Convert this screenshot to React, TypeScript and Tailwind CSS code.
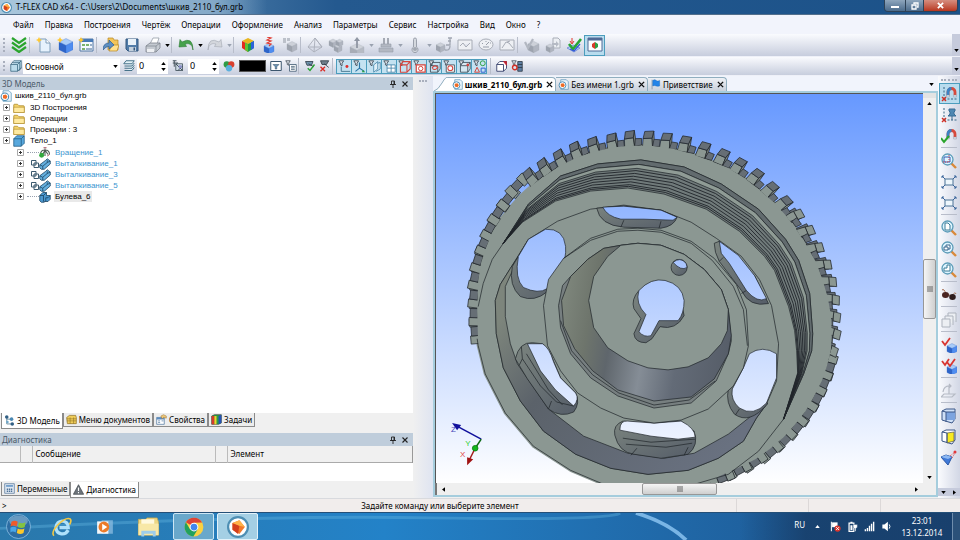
import React from "react";
import clsx from "clsx";

type Point = [number, number];

const cube = (x: number, y: number, s: number, top: string, left: string, right: string) => (
	<g strokeWidth=".3" stroke={left}>
		<path d={`M${x} ${y}l${s} ${-s / 2}l${s} ${s / 2}l${-s} ${s / 2}z`} fill={top} />
		<path d={`M${x} ${y}v${s * 1.1}l${s} ${s / 2}v${-s * 1.1}z`} fill={left} />
		<path d={`M${x + s * 2} ${y}v${s * 1.1}l${-s} ${s / 2}v${-s * 1.1}z`} fill={right} />
	</g>
);
const blueCube = (x: number, y: number, s: number) => cube(x, y, s, "#a9ccf8", "#2e65c9", "#4f8df0");
const grayCube = (x: number, y: number, s: number) => cube(x, y, s, "#cdd1d9", "#9da3ae", "#b0b5c0");
const star = <path d="M3 0l1 2 2 1-2 1-1 2-1-2-2-1 2-1z" fill="#ffc830" />;
const funnel = <path d="M1 1h6L5 4v3l-2-1V4z" fill="#dfe5ec" stroke="#27313c" strokeWidth=".9" />;
const zoomGlass = (
	<>
		<path d="M10 10l5 5" stroke="#d98a3a" strokeWidth="2.4" />
		<circle cx="6.500" cy="6.500" r="5.500" fill="#dff5ff" stroke="#5c9cb8" strokeWidth="1.300" />
	</>
);
const magnet = (
	<>
		<path d="M7 9V6a3.500 3.500 0 017 0v3" fill="none" stroke="#d74a3c" strokeWidth="2.800" />
		<path d="M7 10V6q0-3.500 3.500-3.500" fill="none" stroke="#3b82c4" strokeWidth="2.800" />
		<path d="M5.600 9h2.800v2H5.600zM12.600 9h2.800v2h-2.800z" fill="#dce3ea" stroke="#889" strokeWidth=".4" />
	</>
);
const snapLines = <path d="M3 1v12M3 13h13" stroke="#376583" strokeWidth="1" strokeDasharray="2 1.500" fill="none" />;
const redCross = <path d="M1 11l4 4M5 11l-4 4" stroke="#d22f25" strokeWidth="1.400" />;
const tflexLogo = (
	<>
		<circle cx="8" cy="8" r="7.200" fill="#fff" stroke="#4d8eb3" strokeWidth="1.600" />
		<path d="M4 5l5-2 4 5-4 5-5-3z" fill="#f2792b" />
		<path d="M4 5l5 2-1 6-4-3z" fill="#d33f1c" />
		<path d="M4 5l5-2 4 5-4-1z" fill="#ffb248" />
	</>
);

const icons: Record<string, React.ReactNode> = {
	tflex: tflexLogo,
	chevrons: (
		<path d="M1 1l7 5 7-5M1 5.500l7 5 7-5M1 10l7 5 7-5" fill="none" stroke="#2aa52d" strokeWidth="2.200" />
	),
	newDoc: (
		<>
			<path d="M4 2h6l4 4v9H4z" fill="#e6f2fd" stroke="#7f9db9" />
			<path d="M10 2v4h4" fill="#fff" stroke="#7f9db9" />
			{star}
		</>
	),
	newCube: <>{blueCube(2, 5, 7)}{star}</>,
	newWindow: (
		<>
			<path d="M2 2h13v12H2z" fill="#f5f9fe" stroke="#5278a6" />
			<path d="M2 2h13v3H2z" fill="#4779b5" />
			<path d="M4 7h3v2H4zM8 7h3v2H8zM4 11h3v2H4z" fill="#7cb36c" />
			<path d="M12 7h2v2h-2zM8 11h6v2H8z" fill="#9ab0c8" />
			{star}
		</>
	),
	open: (
		<>
			<path d="M5 4V1h5l1 2h4v10H5z" fill="#f3c65a" stroke="#b88723" strokeWidth=".7" />
			<path d="M6 14l3-6h7l-2 6z" fill="#ffe18d" stroke="#b88723" strokeWidth=".7" />
			<path d="M0 13Q0 6 6 6V3l5 5-5 4V9.500Q3 9 0 13z" fill="#5d8fc2" stroke="#2e5c92" strokeWidth=".7" />
		</>
	),
	save: (
		<>
			<path d="M2 2h12v12H4l-2-2z" fill="#507ba8" stroke="#34587f" />
			<path d="M4 2h8v6H4z" fill="#e8f1f9" />
			<path d="M5 10h7v4H5z" fill="#c2cfdc" />
			<path d="M9.500 10.500h1.500v3H9.500z" fill="#34587f" />
		</>
	),
	print: (
		<>
			<path d="M5 7l3-6h6l-2 6z" fill="#fff" stroke="#8b939d" strokeWidth=".7" />
			<path d="M1 9l4-3h10v5l-4 4H1z" fill="#c5cad1" stroke="#7d848d" strokeWidth=".8" />
			<path d="M1 9h10l4-3M11 9v6" stroke="#7d848d" strokeWidth=".7" fill="none" />
			<path d="M2 12h7v3H2z" fill="#eef0f3" />
		</>
	),
	undo: <path d="M15 13Q14 5 7 7L8.500 9.500L1 10L2 2.500L4 5Q15-1 15 13z" fill="#46a24b" stroke="#2d7a34" strokeWidth=".6" />,
	redo: <path d="M1 13Q2 5 9 7L7.500 9.500L15 10L14 2.500L12 5Q1-1 1 13z" fill="#d3d6dc" stroke="#a3a8b2" strokeWidth=".6" />,
	rgb: (
		<>
			<path d="M2 4l6-3 6 3-6 3z" fill="#e8b61f" />
			<path d="M2 4l6 3v8l-6-4z" fill="#e32a1e" />
			<path d="M5 5.500L8 7v8l-3-2z" fill="#5fc531" />
			<path d="M14 4L8 7v8l6-4z" fill="#1e9e47" />
			<path d="M14 4l-3 1.500V13l3-2z" fill="#2b62d9" />
		</>
	),
	spring: (
		<>
			{blueCube(3, 9, 5)}
			<path d="M6 0l4 1-4 2 4 1-4 2 4 1-2 2" fill="none" stroke="#e03a30" strokeWidth="1.200" />
		</>
	),
	grayParts: <>{grayCube(5, 7, 5)}<path d="M1 1h3v5H1zM5 1h3v3H5z" fill="#bcc1ca" /></>,
	tetra: (
		<path d="M8 1L1 10l6 5 8-5zM8 1L7 15M1 10h14M8 1l7 9" fill="none" stroke="#a9aeb9" strokeWidth=".9" />
	),
	grayBlocks: <>{grayCube(1, 4, 4)}{grayCube(6, 9, 4)}{grayCube(8, 4, 3.500)}</>,
	extrude: (
		<>
			{cube(1, 10, 7, "#cfd3da", "#a7acb6", "#b6bbc4")}
			<path d="M8 11V3" stroke="#8f96a3" strokeWidth="1.800" />
			<path d="M5 4l3-4 3 4z" fill="#8f96a3" />
		</>
	),
	press: (
		<>
			<path d="M5 1h2v6H5zM9 1h2v6H9z" fill="#a4a9b3" />
			<path d="M3 7h10v3H3zM1 11h14v4H1z" fill="#b3b8c2" stroke="#969ca7" strokeWidth=".6" />
		</>
	),
	thermo: (
		<>
			<path d="M6.500 2.500a1.500 1.500 0 013 0V10a3 3 0 11-3 0z" fill="#d4d8de" stroke="#9ba1ac" />
			<circle cx="8" cy="12" r="2" fill="#a2a8b2" />
		</>
	),
	measure: (
		<>
			{grayCube(0, 8, 4.500)}
			<path d="M10 8h4V1M12 1h4M12 4h3M9 13q5 1 5-4" fill="none" stroke="#a1a7b2" strokeWidth="1.300" />
		</>
	),
	chart: <path d="M1 3h14v10H1zM3 9l3-3 3 4 4-4" fill="#eef0f4" stroke="#a7acb6" />,
	gauge: (
		<>
			<ellipse cx="8" cy="7.500" rx="7" ry="5.500" fill="#eef0f4" stroke="#a7acb6" />
			<path d="M8 8l3-3M4 6l1 1M8 4v1M12 6h1M5 10h6" stroke="#979da8" />
		</>
	),
	curve: <path d="M1 3h14v10H1zM3 11l4-6 3 1 4 5M8 5l3-1" fill="#eef0f4" stroke="#a7acb6" />,
	checkCube: <>{grayCube(4, 7, 5.500)}<path d="M1 5l3 6 5-9" fill="none" stroke="#b2b7c1" strokeWidth="2.200" /></>,
	exportDoc: (
		<>
			<path d="M8 1h5l2 2v8H8z" fill="#eceff3" stroke="#a9aeb8" />
			{grayCube(1, 9, 4)}
			<path d="M7 6h4V4l3 3-3 3V8H7z" fill="#b5bac4" />
		</>
	),
	check3d: (
		<>
			<path d="M1 11l6-3 7 3-6 4z" fill="#b8c9f4" stroke="#4b6ecf" strokeWidth=".6" />
			<path d="M3 7l4 5 8-10" fill="none" stroke="#28a536" strokeWidth="2.600" />
			<path d="M4 12l4 2 6-7" fill="none" stroke="#3158d8" strokeWidth="1.300" />
			<path d="M6 1v5M4 4l2 3 2-3" fill="none" stroke="#e23b2e" />
		</>
	),
	window3d: (
		<>
			<path d="M1 1h14v13H1z" fill="#fbfdff" stroke="#516a96" />
			<path d="M1 1h14v2.500H1z" fill="#516a96" />
			<path d="M5 7l3-2v7l-3-2z" fill="#d83a2b" />
			<path d="M11 7L8 5v7l3-2z" fill="#2f9e44" />
		</>
	),
	layers: (
		<path d="M5 1h10v10l-2 0M3 3.500h10v10h-2M1 6h9v9H1zM1 6l4-5M10 6l5-5M10 15l5-4" fill="#bcdcec" stroke="#35657f" />
	),
	sheets: (
		<path d="M4 1h11l-3 4H1zM2 8h10l3-4M2 11h10l3-4M2 14h10l3-4" fill="#e3f2f8" stroke="#35657f" strokeWidth="1.200" />
	),
	priority: (
		<>
			<path d="M5 5h9v9H5z" fill="#cddae4" stroke="#36454f" />
			<path d="M1 1h5M3 1v8M1 4h7M5 5l9 9M8 14l6-6" stroke="#36454f" strokeWidth="1.200" />
			<path d="M9 7h4v4H9z" fill="#8d91c9" />
		</>
	),
	palette: (
		<>
			<circle cx="5" cy="6" r="4.200" fill="#2e9b46" />
			<circle cx="11" cy="6" r="4.200" fill="#d8402f" />
			<circle cx="8" cy="11" r="4.200" fill="#5cb0dd" />
		</>
	),
	filterBox: <><path d="M1 2h14v12H1z" fill="#fff" stroke="#35516a" strokeWidth="1.300" /><path d="M4 6h8l-3 3v3H7V9z" fill="#6b94b5" stroke="#35516a" strokeWidth=".7" /></>,
	filterList: <>{funnel}<path d="M6 6h9v9H6z" fill="#fff" stroke="#35516a" /><path d="M8 8.500h5M8 10.500h5M8 12.500h5" stroke="#35516a" /></>,
	filterOk: <><path d="M2 2h10l-2 5H4zM6 5l7 4" fill="#6f93ad" stroke="#27313c" /><path d="M5 11l3 3 6-8" fill="none" stroke="#29a333" strokeWidth="1.800" /></>,
	filterNo: <><path d="M2 1h11l-3 5H4zM7 5l6 5" fill="#6f7f8c" stroke="#27313c" /><path d="M2 9l6 6M8 9l-6 6" stroke="#d92d27" strokeWidth="1.800" /></>,
	fPoint: <>{funnel}<path d="M4 8v6h11" fill="none" stroke="#35657f" /><circle cx="11" cy="8" r="1.800" fill="#df2f2b" /></>,
	fAxes: <>{funnel}<path d="M8 3v7l6 4M8 10l-5 4" fill="none" stroke="#2b76a8" strokeWidth="1.400" /><path d="M12 12l3 3h-4z" fill="#2da044" /></>,
	fPlane: <>{funnel}<path d="M7 6l5-4v9l-5 4zM12 4l3-1v8l-5 3" fill="#dff0f8" stroke="#4283a8" /></>,
	fGrid: <>{funnel}<path d="M5 6h10v9H5zM10 6v9M5 10h10" fill="#fff" stroke="#4283a8" /></>,
	fBody: <>{funnel}<path d="M3 6h8v9H3zM3 6l3-4h9v9l-4 4M11 6l4-4" fill="none" stroke="#d5443d" strokeWidth="1.300" /></>,
	fFace: <>{funnel}<path d="M4 6h11v9H4z" fill="#fff" stroke="#d5443d" strokeWidth="1.500" /><circle cx="9.500" cy="10.500" r="2.700" fill="none" stroke="#d5443d" strokeWidth="1.200" /></>,
	fEdge: <>{funnel}<path d="M3 7h9v8H3zM3 7l3-4h9v8l-3 4" fill="none" stroke="#36454f" /><path d="M5 10q3-5 7-1-3 5-7 1" fill="none" stroke="#d5443d" strokeWidth="1.300" /></>,
	fLoop: <>{funnel}<path d="M4 6h10v9H4z" fill="#fff" stroke="#36454f" /><circle cx="9" cy="10" r="3" fill="none" stroke="#d5443d" strokeWidth="1.300" /></>,
	fVertex: <>{funnel}<path d="M3 7h9v8H3zM3 7l3-4h9v8l-3 4M12 7l3-4" fill="#d5e8f2" stroke="#36454f" /><circle cx="12" cy="6" r="1.600" fill="#d5443d" /></>,
	fShapes: <>{funnel}<path d="M2 15l3-6 3 6z" fill="none" stroke="#d5443d" strokeWidth="1.200" /><circle cx="12" cy="4" r="3" fill="none" stroke="#2da044" strokeWidth="1.200" /><path d="M10 10h5v5h-5z" fill="none" stroke="#2c5fd0" strokeWidth="1.200" /></>,
	corner: <><path d="M1 6h9v9H1zM1 6l4-4h9v9l-4 4" fill="#fff" stroke="#36416b" strokeWidth="1.200" /><path d="M10 2h4v5z" fill="#c02433" stroke="#c02433" /></>,
	section: <><path d="M9 2h6v13H9z" fill="#5e7fa3" stroke="#27313c" /><path d="M9 6h6M9 10h6" stroke="#27313c" />{funnel}<circle cx="5" cy="10" r="3" fill="none" stroke="#d22f25" strokeWidth="1.800" /></>,
	magnetSnap: <>{snapLines}{magnet}{redCross}</>,
	pinSnap: <>{snapLines}<path d="M8 2h6v2l-1 1v2l2 2H7l2-2V5L8 4zM11 9v4" fill="#4f88b3" stroke="#386c94" />{redCross}</>,
	magnetOk: <>{magnet}<path d="M0 10l3 4 5-6" fill="none" stroke="#2aa52d" strokeWidth="2" /></>,
	zoomWin: <>{zoomGlass}<path d="M3 4h6v5H3z" fill="none" stroke="#355db5" /><path d="M8 2v7H2" fill="none" stroke="#d3464a" strokeDasharray="1 1" /></>,
	fit: <><path d="M4 5h8v6H4z" fill="#edf6fc" stroke="#4a7396" /><path d="M1 2l3 3M15 2l-3 3M1 14l3-3M15 14l-3-3M1 4V2h2M13 2h2v2M1 12v2h2M13 14h2v-2" fill="none" stroke="#39649a" /></>,
	zoomPage: <>{zoomGlass}<path d="M4 3h3l2 2v5H4z" fill="#fff" stroke="#3a7c98" /></>,
	zoomObj: <>{zoomGlass}<path d="M3 6h4v3H3zM5 6V4h4v4H7" fill="#fff" stroke="#36648c" /></>,
	zoomSheet: <>{zoomGlass}<path d="M6 3h3v6H3V6h3z" fill="#fff" stroke="#3a7c98" /></>,
	glasses: <><path d="M1 3q2-2 4 4l6 2q3-5 4-2" fill="none" stroke="#a36d50" /><ellipse cx="4.500" cy="8" rx="3.500" ry="3" fill="#4a2521" /><ellipse cx="11.500" cy="10" rx="3.300" ry="3" fill="#2e1d1d" /></>,
	copies: <path d="M7 1h8v9M4 4h8v9M1 7h8v8H1zM7 1v3M4 4v3" fill="#eceff3" stroke="#adb3bd" />,
	checkOne: <>{blueCube(6, 9, 5)}<path d="M1 4l3 4 5-7" fill="none" stroke="#d83632" strokeWidth="1.800" /></>,
	checkTwo: <>{blueCube(6, 9, 5)}<path d="M1 3l3 4 4-6M6 4l3 4 5-7" fill="none" stroke="#d83632" strokeWidth="1.800" /></>,
	rotatePlane: <path d="M3 11h11l-3 3H0zM8 11V3M2 9q1-7 8-6M8 1l2 2-2 2" fill="none" stroke="#b6bbc5" strokeWidth="1.200" />,
	shaded: <><path d="M1 3l4-2h9v10l-3 4-10-3z" fill="#cfe0f7" stroke="#3a5687" /><path d="M5 4h9v8H5z" fill="#7da4df" /><path d="M1 3l4 1h9M5 4v10" fill="none" stroke="#3a5687" /></>,
	yellowFace: <><path d="M1 3l4-2h9v10l-3 4-10-3z" fill="#fff" stroke="#3a5687" /><path d="M6 4l7-1v9l-7 2z" fill="#f8ea20" stroke="#555" strokeWidth=".7" /><path d="M1 3l5 1M6 14V4" fill="none" stroke="#3a5687" /></>,
	camera: <><path d="M0 7l5-2 6 2-4 8z" fill="#3f79d8" stroke="#2855a4" /><path d="M0 7l5-2 6 2-4 2z" fill="#8db8f2" /><path d="M9 6l5-4M11 8l3-5" stroke="#e2484a" strokeDasharray="1 1" /><circle cx="14" cy="2" r="1.500" fill="#e2383a" /></>,
	folder: <><path d="M1 4q0-1 1-1h4l2 2h6q1 0 1 1v8H1z" fill="#f3d36b" stroke="#a98524" /><path d="M1 7h14v7H1z" fill="#ffeaa0" stroke="#a98524" strokeWidth=".7" /></>,
	docFile: <><path d="M4 1h8l3 3v11H4z" fill="#e9f4fb" stroke="#5995b9" /><circle cx="6.500" cy="9" r="5" fill="#fff" stroke="#4d8eb3" strokeWidth="1.400" /><path d="M4 7l4-1 2 3-2 3-4-1z" fill="#ee6c25" /></>,
	body: <><path d="M1 5l4-4h10v10l-4 4H1z" fill="#58a8dd" stroke="#1f587f" /><path d="M1 5h10v10M11 5l4-4" fill="none" stroke="#1f587f" /></>,
	revolve: <><path d="M2 10q0-6 6-6t6 6M8 2v10M8 4l-3 6M8 4l4 6" fill="none" stroke="#4c5b52" strokeWidth="1.400" /><circle cx="3.500" cy="11" r="3.300" fill="#33a83e" /><path d="M6 1h4M11 12l3-2" stroke="#a3485d" fill="none" strokeWidth="1.300" /></>,
	push: <><path d="M1 9l8-6 2-2 4 3v4l-8 7H3l-2-2z" fill="#65b0df" stroke="#173f5b" /><path d="M1 9l4 2 6-5 0-3M5 11v4M11 6l4-2" fill="none" stroke="#173f5b" /></>,
	boolean: <><path d="M1 6l4-4h5v4h5v5l-3 3H7v1H3l-2-2z" fill="#4b98d0" stroke="#173f5b" /><path d="M1 6h5l4-4M6 6v8M9 9h3l3-3M9 9v5" fill="none" stroke="#173f5b" /></>,
	overlap: <path d="M1 1h9v9H1zM6 6h9v9H6z" fill="none" stroke="#27485f" strokeWidth="1.800" />,
	tree3d: <><path d="M4 3v10h6M4 6h6" fill="none" stroke="#35657f" /><circle cx="4" cy="3" r="2.600" fill="#315f84" /><circle cx="11" cy="6" r="2.600" fill="#4a88b3" /><circle cx="12" cy="13" r="2.600" fill="#315f84" /><circle cx="5" cy="10" r="1.800" fill="#6da7ca" /></>,
	menuDocs: <><path d="M1 5l4-3h9l1 3v9H2z" fill="#f0cd59" stroke="#8a6c1e" /><path d="M1 7h14M1 10h14M6 5v9M11 5v9" stroke="#8a6c1e" strokeWidth=".8" /></>,
	props: <><path d="M1 5h11v10H1z" fill="#fff" stroke="#48719c" /><path d="M1 5h11v3H1z" fill="#5c8cc0" /><path d="M3 10h3M3 12.500h3M8 10h3" stroke="#48719c" /><path d="M7 3l4-2 4 2v3l-4-1-2 2z" fill="#ecc77a" stroke="#9b702b" strokeWidth=".7" /></>,
	tasks: <><path d="M1 3l4-2h10v12l-4 2H1z" fill="#2f9e44" stroke="#222" strokeWidth=".8" /><path d="M1 3h4v12H1z" fill="#d83a2b" /><path d="M5 3h3v12H5z" fill="#f4d32d" /><path d="M11 3l4-2v12l-4 2z" fill="#2650b8" /></>,
	vars: <><path d="M1 1h14v14H1z" fill="#dfe9f3" stroke="#4e7196" /><path d="M3 3h10v2.500H3z" fill="#6c9ac8" /><path d="M4 8h2v2H4zM7 8h2v2H7zM10 8h2v2h-2zM4 11h2v2H4zM7 11h2v2H7zM10 11h2v2h-2z" fill="#4e7196" /></>,
	warn: <><path d="M8 1l7.500 14H.5z" fill="#6d747b" stroke="#40464c" /><path d="M8 5v5M8 11.500v2" stroke="#fff" strokeWidth="1.600" /></>,
	flag: <><path d="M3 1v14" stroke="#8b9aa9" strokeWidth="1.300" /><path d="M4 2q3-2 5 0t5 0v8q-3 1-5 0t-5 0z" fill="#2384e8" stroke="#1763b5" strokeWidth=".6" /></>,
	orb: (
		<>
			<circle cx="8" cy="8" r="7.700" fill="#2d6da3" stroke="#8fc2e5" strokeWidth=".5" />
			<ellipse cx="8" cy="4.500" rx="6" ry="3.600" fill="#8fb9d6" opacity=".6" />
			<path d="M3.500 5q2-1.500 4 0l-.6 3q-2-1.200-4 0z" fill="#ee5a2a" />
			<path d="M8.200 5.300q2 1.300 4.300 0L12 8.300q-2 1.200-4.400 0z" fill="#83c341" />
			<path d="M2.800 8.800q2-1.200 4 0l-.6 3q-2-1.200-3.400 0z" fill="#49a6e8" />
			<path d="M7.500 9.200q2 1.200 4.300 0l-.6 3q-2 1.200-4.300 0z" fill="#fcc92b" />
		</>
	),
	ie: (
		<>
			<path d="M13 10.500Q11 14 7.500 13.500 3 12.500 3.200 8 4 3.500 8 3.200q5 .3 5 5.300H6" fill="none" stroke="#aee1fb" strokeWidth="2.600" />
			<path d="M1.500 15Q-1 12 5 6T14.500 1.500Q16 3 14 6" fill="none" stroke="#f3c845" strokeWidth="1.300" />
		</>
	),
	player: <><path d="M5 2h10v12H5z" fill="#86b9de" opacity=".8" /><path d="M1 3h10v11H1z" fill="#f3f6f9" /><circle cx="7" cy="8" r="4.800" fill="#ec7b29" /><path d="M5.500 5l4.500 3-4.500 3z" fill="#fff" /></>,
	explorer: <><path d="M1 3h5l1-1h7l1 3v9H1z" fill="#ecd684" stroke="#c5a751" strokeWidth=".5" /><path d="M3 3h9v4H3z" fill="#fff9df" /><path d="M1 6h14v8H1z" fill="#f8e8a7" /><path d="M3 15v-4h10v4h-2v-2H5v2z" fill="#9ecdea" /></>,
	chrome: (
		<>
			<circle cx="8" cy="8" r="7.500" fill="#fad141" />
			<path d="M8 8L1.500 4.200A7.500 7.500 0 0114.500 4.400L8 4.600z" fill="#dc4437" />
			<path d="M1.500 4.200A7.500 7.500 0 007.500 15.500L11 9.800 8 8 4.800 9.800z" fill="#22a15c" />
			<circle cx="8" cy="8" r="3.500" fill="#fff" />
			<circle cx="8" cy="8" r="2.700" fill="#4286ed" />
		</>
	),
	trayFlag: <><path d="M2 1v14" stroke="#fff" strokeWidth="1.500" /><path d="M3 2h8v7H3z" fill="#fff" /><circle cx="11" cy="11" r="4.500" fill="#d8372e" /><path d="M9 9l4 4M13 9l-4 4" stroke="#fff" strokeWidth="1.400" /></>,
	power: <><path d="M3 3h7v12H3z" fill="none" stroke="#fff" strokeWidth="1.800" /><path d="M5 1h3v2H5zM5 6h3v7H5z" fill="#fff" /><path d="M9 5h6v4l-2 2v4h-2v-4L9 9z" fill="#fff" stroke="#244b74" strokeWidth=".6" /></>,
	signal: <path d="M1 12h2v3H1zM4 10h2v5H4zM7 7h2v8H7zM10 4h2v11h-2zM13 1h2v14h-2z" fill="#fff" />,
	sound: <><path d="M2 5h3l5-4v14l-5-4H2z" fill="#fff" /><path d="M12 5q2 3 0 6" fill="none" stroke="#fff" strokeWidth="1.400" /></>,
};

const Icon = ({ name, className = "size-4" }: { name: string; className?: string }) => (
	<svg viewBox="0 0 16 16" className={clsx("shrink-0", className)} aria-hidden="true">
		{icons[name]}
	</svg>
);

const menuItems = [
	"Файл", "Правка", "Построения", "Чертёж", "Операции", "Оформление", "Анализ",
	"Параметры", "Сервис", "Настройка", "Вид", "Окно", "?",
];

// "|" is a separator, "v" is a drop-down arrow
const mainTools = [
	"chevrons", "|", "newDoc", "newCube", "newWindow", "|", "open", "save", "print", "v", "|",
	"undo", "v", "redo", "v", "|", "rgb", "spring", "grayParts", "|", "tetra", "grayBlocks",
	"extrude", "v", "press", "v", "thermo", "v", "measure", "chart", "gauge", "curve", "|",
	"checkCube", "exportDoc", "check3d", "window3d",
];
const filterTools = [
	"fPoint", "fAxes", "fPlane", "fGrid", "fBody", "fFace", "fEdge", "fLoop", "fVertex", "fShapes",
];
const viewTools = [
	"magnetSnap", "pinSnap", "magnetOk", "|", "zoomWin", "fit", "fit", "|", "zoomPage", "zoomObj",
	"zoomSheet", "|", "glasses", "|", "copies", "|", "checkOne", "checkTwo", "|", "rotatePlane", "|",
	"shaded", "yellowFace", "camera",
];

const Grip = () => (
	<div className="w-2 shrink-0 flex justify-center py-1">
		<div className="border-l-2 border-dotted border-[#a9afbd]" />
	</div>
);

const Arrow = ({ className = "" }: { className?: string }) => (
	<svg viewBox="0 0 6 4" className={clsx("w-[5px] h-[3px]", className)} aria-hidden="true">
		<path d="M0 0h6L3 4z" fill="currentColor" />
	</svg>
);

const Separator = () => <div className="w-px h-4 mr-[3px] bg-[#b8bdca] shrink-0" />;

const TitleBar = () => (
	<header className="h-[15px] shrink-0 flex items-center justify-between bg-linear-to-r from-[#7daac8] via-[#24598f] via-35% to-[#1c5289] border-b border-[#536f8c]">
		<div className="h-full flex items-center gap-1 pl-px pr-6 bg-linear-to-r from-[#a9c7dc] via-[#84a9c8] via-80% to-transparent">
			<Icon name="tflex" className="size-[11px]" />
			<h1 className="text-[8px]">T-FLEX CAD x64 - C:\Users\2\Documents\шкив_2110_бул.grb</h1>
		</div>
		<div className="flex self-start h-3 mr-0.5 text-white border border-t-0 border-[#2e4257] rounded-b-sm overflow-hidden">
			<button aria-label="Свернуть" className="w-5 flex items-center justify-center bg-linear-to-b from-[#8fa6bd] to-[#4b6b8b]">
				<svg viewBox="0 0 8 6" className="w-2 h-1.5"><path d="M0 3h8v2H0z" fill="#fff" /></svg>
			</button>
			<button aria-label="Развернуть" className="w-[19px] flex items-center justify-center border-x border-[#2e4257] bg-linear-to-b from-[#8fa6bd] to-[#4b6b8b]">
				<svg viewBox="0 0 8 8" className="size-2"><path d="M1 3h4v4H1zM3 2V1h4v4H6" fill="none" stroke="#fff" strokeWidth="1.300" /></svg>
			</button>
			<button aria-label="Закрыть" className="w-[33px] flex items-center justify-center bg-linear-to-b from-[#d58d7f] to-[#b7341d]">
				<svg viewBox="0 0 8 8" className="size-[7px]"><path d="M1 1l6 6M7 1L1 7" stroke="#fff" strokeWidth="2" /></svg>
			</button>
		</div>
	</header>
);

const BarEnd = () => (
	<div className="ml-auto w-2 self-stretch flex items-end justify-center pb-1 bg-[#c6cbdc]">
		<Arrow />
	</div>
);

const MainToolbar = () => (
	<div className="h-[23px] shrink-0 flex items-stretch bg-linear-to-b from-[#fafbfe] to-[#c7cddd] border-b border-[#eef0f8]">
		<Grip />
		<div className="flex items-center">
			{mainTools.map((tool, i) => {
				if (tool === "|") return <Separator key={i} />;
				if (tool === "v")
					return (
						<button key={i} aria-label="Ещё" className="w-2 flex justify-center">
							<Arrow className={i > 12 ? "text-gray-400" : "text-black"} />
						</button>
					);
				return (
					<button
						key={i}
						aria-label={tool}
						className={clsx(
							"w-[21px] h-[21px] flex items-center justify-center",
							tool === "window3d" && "border border-[#4c9dbd] bg-[#b9dcee]"
						)}
					>
						<Icon name={tool} />
					</button>
				);
			})}
		</div>
		<BarEnd />
	</div>
);

const Spin = ({ label }: { label: string }) => (
	<label className="w-[31px] h-[15px] flex items-center justify-between bg-white px-0.5">
		<input aria-label={label} defaultValue="0" className="w-4 text-[9px] outline-none" />
		<span className="flex flex-col gap-[3px]">
			<Arrow className="rotate-180" />
			<Arrow />
		</span>
	</label>
);

const SmallTool = ({ name, on = false }: { name: string; on?: boolean }) => (
	<button
		aria-label={name}
		className={clsx(
			"h-[15px] flex items-center justify-center",
			on ? "w-4 -mr-px border border-[#4c9dbd] bg-[#c4e2f1]" : "w-[15px]"
		)}
	>
		<Icon name={name} className={on ? "size-[13px]" : "size-3"} />
	</button>
);

const PropertyToolbar = () => (
	<div className="h-[19px] shrink-0 flex items-stretch bg-linear-to-b from-[#fafbfe] to-[#c7cddd] border-b border-[#eef0f8]">
		<Grip />
		<div className="flex items-center">
			<SmallTool name="layers" />
			<div className="relative flex">
				<select aria-label="Слой" className="appearance-none block w-[97px] h-[15px] bg-white pl-0.5 text-[8px] leading-[15px] outline-none">
					<option>Основной</option>
				</select>
				<Arrow className="absolute right-0.5 top-1.5 pointer-events-none" />
			</div>
			<div className="w-[17px] flex justify-center"><SmallTool name="sheets" /></div>
			<Spin label="Уровень" />
			<div className="w-5 flex justify-center"><SmallTool name="priority" /></div>
			<Spin label="Приоритет" />
			<div className="w-5 flex justify-center"><SmallTool name="palette" /></div>
			<button aria-label="Цвет" className="w-[27px] h-3 mr-0.5 bg-black border border-[#555]" />
			<SmallTool name="filterBox" />
			<SmallTool name="filterList" />
			<Separator />
			<SmallTool name="filterOk" />
			<SmallTool name="filterNo" />
			<Separator />
			<div className="flex pr-1">
				{filterTools.map((tool) => (
					<SmallTool key={tool} name={tool} on />
				))}
			</div>
			<Separator />
			<SmallTool name="corner" />
			<SmallTool name="section" />
		</div>
		<BarEnd />
	</div>
);

const PanelHeader = ({ title }: { title: string }) => (
	<div className="h-[13px] shrink-0 flex items-center justify-between bg-[#bfcddb] pl-0.5 pr-1">
		<h2 className="text-[8px] text-[#4b5a69]">{title}</h2>
		<div className="flex gap-1">
			<button aria-label="Закрепить">
				<svg viewBox="0 0 8 8" className="size-2"><path d="M2.500 1h3v3.500h-3zM1 4.500h6M4 4.500V8M5 1v3" fill="none" stroke="#222" strokeWidth=".9" /></svg>
			</button>
			<button aria-label="Закрыть панель">
				<svg viewBox="0 0 8 8" className="size-2"><path d="M1.500 1.500l5 5M6.500 1.500l-5 5" stroke="#222" strokeWidth="1.100" /></svg>
			</button>
		</div>
	</div>
);

const Expander = () => (
	<button aria-label="Развернуть узел" className="w-[13px] flex justify-center shrink-0">
		<svg viewBox="0 0 7 7" className="size-[7px]">
			<path d="M.5.5h6v6h-6z" fill="#fff" stroke="#aaa" />
			<path d="M2 3.500h3M3.500 2v3" stroke="#333" />
		</svg>
	</button>
);

const rootNodes = [
	{ label: "3D Построения", icon: "folder" },
	{ label: "Операции", icon: "folder" },
	{ label: "Проекции : 3", icon: "folder" },
	{ label: "Тело_1", icon: "body" },
];
const bodyNodes = [
	{ label: "Вращение_1", icon: "revolve", overlap: false },
	{ label: "Выталкивание_1", icon: "push", overlap: true },
	{ label: "Выталкивание_3", icon: "push", overlap: true },
	{ label: "Выталкивание_5", icon: "push", overlap: true },
	{ label: "Булева_6", icon: "boolean", overlap: false },
];

const ModelTree = () => (
	<div className="flex-1 min-h-0 bg-white font-['Liberation_Sans',sans-serif] text-[8px] leading-[11px]">
		<div className="h-[11px] flex items-center gap-[3px]">
			<Icon name="docFile" className="size-3" />
			шкив_2110_бул.grb
		</div>
		<ul className="mt-px">
			{rootNodes.map((node) => (
				<li key={node.label} className="h-[11px] flex items-center">
					<Expander />
					<Icon name={node.icon} className="size-3" />
					<span className="pl-[5px]">{node.label}</span>
				</li>
			))}
		</ul>
		<ul className="mt-px pl-3.5">
			{bodyNodes.map((node) => (
				<li key={node.label} className="h-[11px] flex items-center">
					<Expander />
					<div className="w-3 flex justify-end">
						{node.overlap ? <Icon name="overlap" className="size-2" /> : <div className="w-3 border-t border-dotted border-gray-400" />}
					</div>
					<Icon name={node.icon} className="size-3" />
					<span className={clsx("ml-[3px] px-px", node.icon === "boolean" ? "bg-[#e9e9e9]" : "text-[#3b95d0]")}>
						{node.label}
					</span>
				</li>
			))}
		</ul>
	</div>
);

interface TabInfo {
	label: string;
	icon: string;
}

const PanelTabs = ({ tabs, active }: { tabs: TabInfo[]; active: string }) => (
	<div className="h-4 shrink-0 flex items-start pl-px">
		{tabs.map((tab) => (
			<button
				key={tab.label}
				className={clsx(
					"flex items-center gap-0.5 px-0.5 text-[8px] border border-t-0 border-[#8b8b8b]",
					tab.label === active ? "h-4 bg-white" : "h-3.5 bg-[#ededed]"
				)}
			>
				<Icon name={tab.icon} className="size-[11px]" />
				{tab.label}
			</button>
		))}
	</div>
);

const LeftColumn = () => (
	<aside className="w-[43%] shrink-0 flex flex-col pt-px">
		<PanelHeader title="3D Модель" />
		<ModelTree />
		<PanelTabs
			active="3D Модель"
			tabs={[
				{ label: "3D Модель", icon: "tree3d" },
				{ label: "Меню документов", icon: "menuDocs" },
				{ label: "Свойства", icon: "props" },
				{ label: "Задачи", icon: "tasks" },
			]}
		/>
		<div className="h-1" />
		<PanelHeader title="Диагностика" />
		<div className="h-[35px] bg-white">
			<table className="w-full table-fixed text-left text-[8px]">
				<thead>
					<tr className="h-4 bg-[#f0f0f0] border-b border-[#aaa]">
						<th className="w-5 border-r border-[#bbb]" />
						<th className="w-3 border-r border-[#bbb]" />
						<th className="w-[183px] pl-[3px] font-normal border-r border-[#bbb]">Сообщение</th>
						<th className="w-3 border-r border-[#bbb]" />
						<th className="pl-[3px] font-normal border-r border-[#999]">Элемент</th>
					</tr>
				</thead>
			</table>
		</div>
		<div className="h-px" />
		<PanelTabs
			active="Диагностика"
			tabs={[
				{ label: "Переменные", icon: "vars" },
				{ label: "Диагностика", icon: "warn" },
			]}
		/>
	</aside>
);

const hub: Point = [655, 316];
const rimOutline =
	"477,310 478,345 485,373 505,412 533,445 570,469 603,483 650,493 700,488 718,475 738,466 754,458 768,448 782,436 793,424 804,410 812,396 820,380 825,366 829,350 830,332 829,314 826,297 821,280 815,263 806,247 796,231 785,216 772,202 758,190 743,178 727,168 709,161 691,154 672,149 650,146 628,146 610,148 593,152 577,157 561,165 547,174 533,184 521,195 511,206 501,218 492,232 486,247 481,262 478,280";

const topTeeth: Point[] = [
	[527, 174], [541, 164], [557, 155], [573, 147], [591, 142], [610, 138], [628, 135], [647, 135],
	[665, 137], [684, 140], [703, 146], [722, 153], [739, 162], [756, 173], [771, 186], [785, 200],
];
const rightTeeth: Point[] = [
	[797, 215], [808, 231], [817, 248], [825, 265], [830, 282], [833, 300], [834, 317], [834, 334], [831, 351],
];
const sideTeeth: Point[] = [
	[828, 367], [822, 383], [815, 398], [806, 413], [795, 427], [783, 439], [769, 451], [753, 461],
	[737, 469], [720, 477], [475, 330], [474, 312], [474, 294], [475, 276], [478, 259], [484, 242],
	[490, 227], [498, 212], [508, 198], [517, 185],
];

const grooveOuter: Point[] = [
	[503, 243], [528, 204], [560, 176], [597, 164], [640, 160], [683, 167], [720, 184], [757, 209],
	[784, 239], [797, 260], [808, 293], [811, 333], [810, 350], [802, 373], [782, 418],
];
const grooveInner: Point[] = [
	[503, 243], [522, 222], [555, 201], [590, 191], [627, 188], [663, 194], [705, 209], [738, 231],
	[763, 256], [773, 270], [787, 306], [793, 330], [795, 350], [796, 372], [782, 418],
];
const between = (t: number) =>
	grooveOuter.map(([x, y], i): Point => [
		x + (grooveInner[i][0] - x) * t,
		y + (grooveInner[i][1] - y) * t,
	]);
const line = (t: number) => between(t).join(" ");
const band = (from: number, to: number) => [...between(from), ...between(to).reverse()].join(" ");

const place = ([x, y]: Point) => {
	const angle = (Math.atan2(y - hub[1], x - hub[0]) * 180) / Math.PI + 90;
	return `translate(${x} ${y}) rotate(${angle})`;
};

const LIGHT = "#8b9792";
const DARK = "#666e75";

const Pulley = () => (
	<svg viewBox="436 93 485 390" preserveAspectRatio="xMidYMid slice" className="block w-full h-full">
		<defs>
			<linearGradient id="sky" gradientUnits="userSpaceOnUse" x1="0" y1="93" x2="0" y2="483">
				<stop offset="0" stopColor="#6698ff" />
				<stop offset="1" stopColor="#ffffff" />
			</linearGradient>
			<linearGradient id="bowl" gradientUnits="userSpaceOnUse" x1="560" y1="320" x2="730" y2="350">
				<stop offset="0" stopColor="#7d857b" />
				<stop offset=".16" stopColor="#6e756c" />
				<stop offset=".3" stopColor="#5f666c" />
				<stop offset=".5" stopColor="#858d96" />
				<stop offset=".7" stopColor="#636b77" />
				<stop offset="1" stopColor="#565d68" />
			</linearGradient>
			<linearGradient id="wall" gradientUnits="userSpaceOnUse" x1="500" y1="320" x2="700" y2="480">
				<stop offset="0" stopColor="#7d857c" />
				<stop offset=".3" stopColor="#5b626a" />
				<stop offset="1" stopColor="#697180" />
			</linearGradient>
			<linearGradient id="slot" x1="0" y1="0" x2="1" y2="1">
				<stop offset="0" stopColor="#7b847f" />
				<stop offset="1" stopColor="#555d68" />
			</linearGradient>
		</defs>
		<rect x="436" y="93" width="485" height="390" fill="url(#sky)" />
		<g stroke="#20252a" strokeWidth=".7" strokeLinejoin="round">
			<polygon points={rimOutline} fill={LIGHT} stroke={LIGHT} strokeWidth="3" />
			<g fill={LIGHT}>
				{sideTeeth.map((p, i) => (
					<g key={i} transform={place(p)}>
						<path d="M-13-5H-5V6H-13zM4-5H12V6H4z" />
						<path d="M-5-4H4V4H-5z" fill={DARK} />
					</g>
				))}
				{rightTeeth.map((p, i) => (
					<g key={i} transform={place(p)}>
						<path d="M-8-1H4L2 10H-9z" fill={DARK} />
						<path d="M-4-5L5-4 3 3-6 2z" />
						<path d="M-6 2L3 3 0 11H-8z" />
						<path d="M1 3L9 3 8 9 1 9z" fill={DARK} />
					</g>
				))}
				{topTeeth.map((p, i) => (
					<g key={i} transform={place(p)}>
						<path d="M4 4.500L12 5.500 11 12H3z" fill={DARK} />
						<path d="M-5 3.500H4V12H-6z" />
						<path d="M4 3.500L6-3.500V4L4 12z" fill="#7c8580" />
						<path d="M-5 3.500L-3-3.500H6L4 3.500z" fill={DARK} />
					</g>
				))}
			</g>
			<polygon points={rimOutline} fill={LIGHT} stroke="none" />
			<polyline points="477,338 478,345 485,373 505,412 533,445 570,469 603,483" fill="none" />

			<polygon points={band(0, 1)} fill="#707a7a" />
			<polygon points={band(0, 0.16)} fill="#626b6e" />
			<polygon points={band(0.16, 0.3)} fill="#8f9b95" />
			{[0.38, 0.48, 0.58, 0.68, 0.78, 0.88, 0.94].map((t) => (
				<polyline key={t} points={line(t)} fill="none" strokeWidth=".9" />
			))}
			<polyline points="782,418 757,450 727,473 693,483" fill="none" />
			<polyline points="503,243 492,259 483,283 478,306" fill="none" />

			<polygon
				fill={LIGHT}
				points="495,300 500,284 510,268 528,239 557,221 590,209 623,205 660,210 690,222 715,238 740,256 758,279 770,305 777,343 775,380 765,403 755,417 742,440 717,457 687,469 647,473 610,467 575,453 543,430 520,400 503,367 496,333"
			/>
			<polygon
				fill="url(#wall)"
				points="510,268 500,284 495,300 496,333 503,367 520,400 543,430 575,453 610,467 647,473 687,469 717,457 742,440 755,417 766,402 727,433 693,452 663,457 627,452 583,435 548,408 517,363 510,343 505,316 505,286 520,253"
			/>

			<path d="M596 208Q599 225 623 227L660 228Q673 226 676 217L660 210 623 206z" fill="url(#slot)" />
			<path d="M602 207L623 206 660 210 676 217 672 220 643 219 620 219Q606 216 602 207z" fill="url(#sky)" />
			<path d="M623 220L620 227M660 221L658 228" />
			<path d="M528 239L512 266Q508 285 520 296 534 302 547 291L560 270z" fill="url(#slot)" />
			<path d="M528 239L545 229Q563 228 565 246 566 258 560 270L547 288Q538 294 523 287 514 278 518 256z" fill="url(#sky)" />
			<path d="M713 243Q713 252 718 261L740 290Q748 307 767 303L753 275 718 241z" fill="url(#slot)" />
			<path d="M718 241L737 255 753 275 765 298Q756 303 745 290L728 263 720 253z" fill="url(#sky)" />
			<path d="M722 257L718 261M745 290L740 293" />
			<path d="M727 388Q724 402 733 413 748 424 766 403L742 367z" fill="url(#slot)" />
			<path d="M748 353Q761 344 775 353L775 377 765 402Q752 416 738 407 729 399 731 388L742 367z" fill="url(#sky)" />
			<path d="M738 408L734 414" />
			<path d="M622 420Q612 424 614 434 618 451 633 453L660 457 687 453Q698 444 693 430L680 420 653 422z" fill="url(#slot)" />
			<path d="M619 429Q619 419 627 420L653 422 680 420Q694 427 694 436L677 438 650 435z" fill="url(#sky)" />
			<path d="M622 437L650 441 694 438M625 443L665 446 691 442M636 447L630 454M687 446L683 454" fill="none" />
			<path d="M515 358Q519 341 532 342L542 343 550 353 560 377 575 392Q580 402 573 411 560 417 548 408L527 378z" fill="url(#slot)" />
			<path d="M527 343L542 343Q549 347 553 361L560 377 575 392Q579 398 573 405L555 389 540 370z" fill="url(#sky)" />
			<path d="M521 346L522 358 540 385 556 401 573 405M526 353L548 389 562 404M519 364L522 358M548 408L551 400" fill="none" />

			<polygon
				fill={LIGHT}
				points="543,305 548,279 563,258 590,238 617,229 637,228 660,230 690,241 713,258 735,284 745,309 747,345 742,367 732,385 707,408 680,419 653,422 623,417 600,407 577,392 560,370 547,345"
			/>
			<polyline points="563,258 590,240 617,231 637,230 660,232 690,243 711,260 732,286 742,309 746,345" fill="none" />
			<polygon
				fill="#777f80"
				points="558,305 562,285 570,276 587,259 603,248 620,245 637,243 660,245 683,254 703,269 720,289 727,309 730,340 727,353 715,380 690,402 653,407 617,395 590,377 570,353 560,327"
			/>
			<polygon
				fill="url(#bowl)"
				points="561,300 570,276 587,259 603,248 620,245 637,243 660,245 683,254 703,269 720,289 727,309 730,335 727,353 713,378 690,396 653,400 617,389 592,370 574,348 563,325"
			/>
			<polyline points="560,320 571,350 592,374 618,392 653,404 688,399 714,380" fill="none" />
			<polygon
				fill={LIGHT}
				points="620,245 637,243 660,245 683,254 703,269 720,289 727,309 726,330 720,343 707,357 687,366 667,369 647,367 627,360 607,347 593,327 588,300 593,276 607,256"
			/>

			<circle cx="678" cy="267" r="8" fill="url(#slot)" />
			<path d="M672 262Q679 256 685 263L686 267Q680 271 672 262z" fill="url(#sky)" />
			<path d="M638 290Q630 299 633 308L640 318 633 333Q634 342 645 342L651 338 659 326Q675 330 683 315L680 300z" fill="url(#slot)" />
			<path d="M638 290Q650 277 664 280 681 284 683 300 683 313 677 320L658 320 650 335Q643 337 638 331L645 314Q634 303 638 290z" fill="url(#sky)" />
		</g>

		<g strokeWidth="1.500" fill="none">
			<path d="M481 438L455 424" stroke="#10109c" />
			<path d="M452 422l9 2-4 5z" fill="#10109c" />
			<path d="M481 438L475 447" stroke="#0c6a12" />
			<path d="M475 447L469 459" stroke="#a01818" />
			<circle cx="475" cy="447" r="2.800" fill="#12b51c" stroke="#0b7a12" strokeWidth=".8" />
			<path d="M467 464l0-8 6 2z" fill="#a01212" />
		</g>
		<g fontFamily="Liberation Sans, sans-serif" fontSize="8">
			<text x="451" y="431" fill="#4547b8">Z</text>
			<text x="465" y="445" fill="#32d038">Y</text>
			<text x="460" y="456" fill="#e24444">X</text>
		</g>
	</svg>
);

const DocTab = ({ label, icon, active = false }: TabInfo & { active?: boolean }) => (
	<div
		className={clsx(
			"flex items-center h-full gap-0.5 pr-0.5 text-[8px] border-r border-t border-[#90aebf] rounded-tr-sm",
			active ? "bg-white font-bold" : "pl-0.5 bg-linear-to-b from-[#eef1f5] to-[#c9d1dc]"
		)}
	>
		<Icon name={icon} className="size-[11px]" />
		<button>{label}</button>
		<button aria-label={`Закрыть ${label}`} className="ml-0.5">
			<svg viewBox="0 0 8 8" className="size-[7px]"><path d="M1 1l6 6M7 1L1 7" stroke="#111" strokeWidth="1.600" /></svg>
		</button>
	</div>
);

const Scroll = ({ vertical = false }: { vertical?: boolean }) => (
	<div className={clsx("flex items-center justify-between bg-[#efefef]", vertical ? "flex-col w-[13px] py-1 border-t-[5px] border-[#e3e3e3]" : "flex-1 px-1 border-l-2 border-[#777]")}>
		<Arrow className={vertical ? "rotate-180" : "rotate-90"} />
		<div
			className={clsx(
				"flex items-center justify-center border border-[#979797] rounded-xs",
				vertical ? "h-[60px] w-full mb-1 bg-linear-to-r from-[#f5f5f5] to-[#cfcfcf]" : "w-[75px] h-full bg-linear-to-b from-[#f5f5f5] to-[#cfcfcf]"
			)}
		>
			<svg viewBox="0 0 6 6" className={clsx("size-1.5", vertical && "rotate-90")}><path d="M1 0v6M3 0v6M5 0v6" stroke="#555" strokeWidth=".9" /></svg>
		</div>
		<Arrow className={vertical ? "" : "-rotate-90"} />
	</div>
);

const DocumentArea = () => (
	<main className="flex-1 min-w-0 flex flex-col pt-px bg-[#f1f4fc]">
		<div className="h-3.5 shrink-0 flex items-stretch">
			<svg viewBox="0 0 18 14" className="w-[18px] h-3.5 ml-px shrink-0" aria-hidden="true">
				<path d="M0 14Q4 13 8 6T14 .5H18V14z" fill="#fff" />
				<path d="M0 14Q4 13 8 6T14 .5H18" fill="none" stroke="#90aebf" />
			</svg>
			<DocTab label="шкив_2110_бул.grb" icon="docFile" active />
			<DocTab label="Без имени 1.grb" icon="docFile" />
			<DocTab label="Приветствие" icon="flag" />
			<button aria-label="Список окон" className="ml-auto mr-1"><Arrow className="w-1.5" /></button>
		</div>
		<div className="flex-1 min-h-0 flex flex-col border-2 border-[#a5cddd]">
			<div className="flex-1 min-h-0 flex">
				<div className="flex-1 min-w-0 border-l border-t border-[#555] overflow-hidden">
					<Pulley />
				</div>
				<Scroll vertical />
			</div>
			<div className="h-3 shrink-0 flex">
				<Scroll />
				<div className="w-[13px] bg-[#efefef]" />
			</div>
		</div>
		<div className="h-px bg-[#f0f0f0]" />
	</main>
);

const ViewToolbar = () => (
	<div className="w-[22px] shrink-0 flex flex-col items-center bg-linear-to-r from-[#fafbfe] to-[#d2d7e5]">
		<div className="w-4 mt-[3px] mb-0.5 border-t-2 border-dotted border-[#a9afbd]" />
		{viewTools.map((tool, i) =>
			tool === "|" ? (
				<div key={i} className="w-4 h-px mt-px mb-0.5 bg-[#b8bdca] shrink-0" />
			) : (
				<button
					key={i}
					aria-label={tool}
					className={clsx(
						"w-[21px] h-[21px] shrink-0 flex items-center justify-center",
						i === 0 && "border border-[#4c9dbd] bg-[#b9dcee]"
					)}
				>
					<Icon name={tool} />
				</button>
			)
		)}
		<div className="mt-auto mb-0.5 w-full h-2 flex items-center justify-around bg-[#c6cbdc]">
			<Arrow />
			<Arrow className="-rotate-90" />
		</div>
	</div>
);

const StatusBar = () => (
	<div className="relative h-3.5 shrink-0 flex items-center bg-[#f1edec] border-t border-[#d8dade] text-[8px] pl-0.5">
		<span>&gt;</span>
		<p className="absolute inset-x-0 -left-20 text-center">Задайте команду или выберите элемент</p>
		<div className="ml-auto h-full w-[224px] flex">
			<div className="w-[72px] border-l border-[#dcd8d8]" />
			<div className="w-[72px] border-l border-[#dcd8d8]" />
			<div className="flex-1 border-l border-[#dcd8d8]" />
		</div>
	</div>
);

const Taskbar = () => (
	<footer className="relative h-7 shrink-0 flex items-center text-white bg-linear-to-r from-[#2a78ab] via-[#2382c8] via-40% to-[#1c4f88] border-t border-[#244f77]">
		<svg viewBox="0 0 960 28" preserveAspectRatio="none" className="absolute inset-0 w-full h-full" aria-hidden="true">
			<defs>
				<linearGradient id="tray">
					<stop offset="0" stopColor="#173c66" stopOpacity="0" />
					<stop offset=".3" stopColor="#173c66" stopOpacity=".8" />
				</linearGradient>
			</defs>
			<path d="M0 16Q250 2 430 5T620 0" fill="none" stroke="#62b5df" strokeWidth="3" opacity=".4" />
			<path d="M636 0Q668 10 686 28" fill="none" stroke="#9fd5ff" strokeWidth="4" opacity=".7" />
			<path d="M740 0h220v28H740z" fill="url(#tray)" />
		</svg>
		<div className="relative flex items-center h-full">
			<button aria-label="Пуск" className="w-[37px] flex justify-center"><Icon name="orb" className="size-[25px]" /></button>
			<button aria-label="Internet Explorer" className="w-[50px] flex justify-center"><Icon name="ie" className="size-5" /></button>
			<button aria-label="Проигрыватель" className="w-9 flex justify-center"><Icon name="player" className="size-[18px]" /></button>
			<button aria-label="Проводник" className="w-[50px] flex justify-center"><Icon name="explorer" className="size-[23px]" /></button>
			<button aria-label="Chrome" className="w-[41px] h-full flex items-center justify-center border border-[#cbe6f4] rounded-xs bg-[#69a8cb]">
				<Icon name="chrome" className="size-5" />
			</button>
			<button aria-label="T-FLEX CAD" className="w-[41px] h-full ml-[3px] flex items-center justify-center border border-[#e2f2fa] rounded-xs bg-[#a4cfe4]">
				<Icon name="tflex" className="size-[22px]" />
			</button>
		</div>
		<div className="relative ml-auto flex items-center h-full text-[8px]">
			<span className="mb-1 mr-2.5">RU</span>
			<Arrow className="rotate-180 mr-2.5" />
			<div className="flex gap-1.5">
				<Icon name="trayFlag" className="size-[11px]" />
				<Icon name="power" className="size-[11px]" />
				<Icon name="signal" className="size-[11px]" />
				<Icon name="sound" className="size-[11px]" />
			</div>
			<div className="w-[60px] text-center leading-3">
				<div>23:01</div>
				<div>13.12.2014</div>
			</div>
			<button aria-label="Показать рабочий стол" className="w-2 h-full border-l border-[#6f8dac] bg-[#2b5179]" />
		</div>
	</footer>
);

const App: React.FC = () => {
	return (
		<div className="h-screen flex flex-col overflow-hidden bg-[#f0f0f0] text-black font-['Noto_Sans','Open_Sans',sans-serif]">
			<TitleBar />
			<nav className="h-[19px] shrink-0 flex items-center gap-[11px] pl-[13px] bg-[#f2f4fc] text-[8px]">
				{menuItems.map((item) => (
					<button key={item}>{item}</button>
				))}
			</nav>
			<MainToolbar />
			<PropertyToolbar />
			<div className="flex-1 min-h-0 flex">
				<LeftColumn />
				<div className="w-5 shrink-0 flex justify-center pt-1 bg-linear-to-r from-[#f0f0f0] to-[#dfe4f1]">
					<div className="w-2 h-0.5 border-t-2 border-dotted border-[#a9afbd]" />
				</div>
				<DocumentArea />
				<ViewToolbar />
			</div>
			<StatusBar />
			<Taskbar />
		</div>
	);
};

export default App;
